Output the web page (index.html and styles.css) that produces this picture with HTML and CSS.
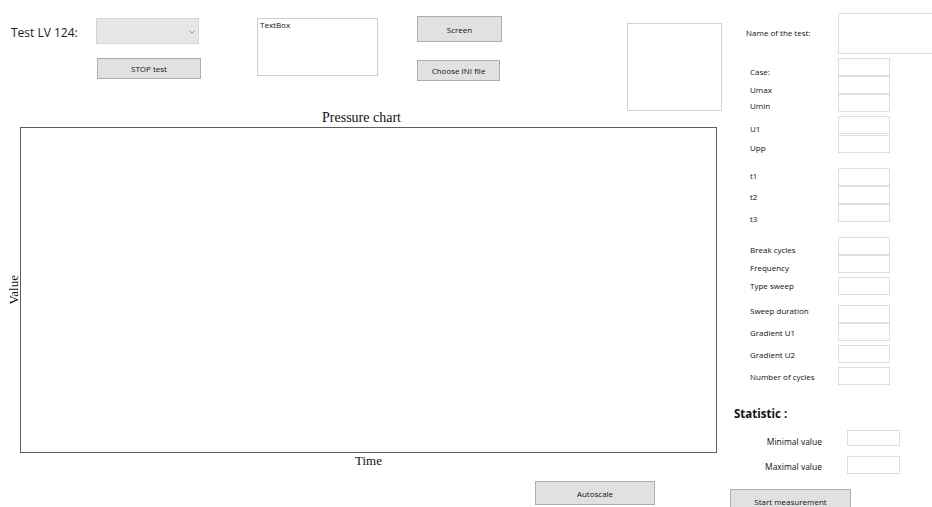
FILE: index.html
```html
<!DOCTYPE html>
<html lang="en">
<head>
<meta charset="utf-8">
<title>Test LV 124</title>
<link rel="stylesheet" href="styles.css">
</head>
<body>
<div class="window">
  <main class="main">
    <div class="toolbar">
      <div class="test-label">Test LV 124:</div>
      <div class="stack stack-run">
        <div class="combo">
          <svg class="combo-arrow" width="6" height="4" viewBox="0 0 6 4"><path d="M0.5 0.8 L3 3.2 L5.5 0.8" fill="none" stroke="#8a8a8a" stroke-width="1"/></svg>
        </div>
        <button class="btn btn-stop">STOP test</button>
      </div>
      <div class="memo">TextBox</div>
      <div class="stack stack-file">
        <button class="btn btn-screen">Screen</button>
        <button class="btn btn-ini">Choose INI file</button>
      </div>
      <div class="preview"></div>
    </div>

    <div class="chart">
      <div class="chart-title">Pressure chart</div>
      <div class="axis-y">Value</div>
      <div class="plot"></div>
      <div class="axis-x">Time</div>
    </div>

    <div class="footer">
      <button class="btn btn-autoscale">Autoscale</button>
    </div>
  </main>

  <aside class="panel">
    <div class="params">
      <div class="labels">
        <span class="lbl lbl-name">Name of the test:</span>
        <span class="lbl mt-27">Case:</span>
        <span class="lbl mt-6">Umax</span>
        <span class="lbl mt-4">Umin</span>
        <span class="lbl mt-11">U1</span>
        <span class="lbl mt-7">Upp</span>
        <span class="lbl mt-16">t1</span>
        <span class="lbl mt-9">t2</span>
        <span class="lbl mt-10">t3</span>
        <span class="lbl mt-19">Break cycles</span>
        <span class="lbl mt-6">Frequency</span>
        <span class="lbl mt-6">Type sweep</span>
        <span class="lbl mt-13">Sweep duration</span>
        <span class="lbl mt-10">Gradient U1</span>
        <span class="lbl mt-10">Gradient U2</span>
        <span class="lbl mt-10">Number of cycles</span>
      </div>
      <div class="fields">
        <div class="field field-name"></div>
        <div class="field mt-4"></div>
        <div class="field"></div>
        <div class="field"></div>
        <div class="field mt-4"></div>
        <div class="field mt-1"></div>
        <div class="field mt-15"></div>
        <div class="field"></div>
        <div class="field"></div>
        <div class="field mt-15"></div>
        <div class="field"></div>
        <div class="field mt-4"></div>
        <div class="field mt-10"></div>
        <div class="field"></div>
        <div class="field mt-4"></div>
        <div class="field mt-4"></div>
      </div>
    </div>

    <div class="stats">
      <div class="stats-title">Statistic :</div>
      <div class="stat-row stat-min">
        <span class="stat-label">Minimal value</span>
        <div class="field stat-field"></div>
      </div>
      <div class="stat-row stat-max">
        <span class="stat-label">Maximal value</span>
        <div class="field stat-field"></div>
      </div>
      <button class="btn btn-measure">Start measurement</button>
    </div>
  </aside>
</div>
</body>
</html>
```

FILE: styles.css
```css
* {
  box-sizing: border-box;
}

html, body {
  margin: 0;
  padding: 0;
  background: #ffffff;
}

body {
  font-family: "Open Sans", "Noto Sans", sans-serif;
  color: #111;
  width: 932px;
  height: 507px;
  overflow: hidden;
}

.window {
  display: grid;
  grid-template-columns: 730px 202px;
  height: 507px;
}

/* ---------- left side ---------- */

.toolbar {
  display: flex;
  align-items: flex-start;
  height: 109px;
}

.test-label {
  width: 96px;
  padding-left: 11px;
  margin-top: 25px;
  font-size: 12px;
  line-height: 16px;
  color: #1a1a1a;
}

.stack {
  display: flex;
  flex-direction: column;
  align-items: flex-start;
}

.stack-run {
  margin-top: 18px;
}

.combo {
  position: relative;
  width: 103px;
  height: 26px;
  background: #e6e6e6;
  border: 1px solid #d6d6d6;
}

.combo-arrow {
  position: absolute;
  right: 3px;
  top: 11px;
}

.btn {
  display: flex;
  align-items: center;
  justify-content: center;
  padding: 0;
  font-family: "Open Sans", "Noto Sans", sans-serif;
  font-size: 8px;
  color: #111;
  background: #e1e1e1;
  border: 1px solid #adadad;
  border-radius: 0;
}

.btn-stop {
  margin-top: 14px;
  margin-left: 1px;
  width: 104px;
  height: 21px;
}

.memo {
  margin-top: 18px;
  margin-left: 56px;
  width: 121px;
  height: 58px;
  border: 1px solid #cfcfcf;
  padding: 1px 2px;
  font-size: 8px;
  line-height: 10px;
}

.stack-file {
  margin-top: 16px;
  margin-left: 39px;
}

.btn-screen {
  width: 85px;
  height: 26px;
}

.btn-ini {
  margin-top: 18px;
  width: 83px;
  height: 21px;
}

.preview {
  flex: none;
  margin-top: 23px;
  margin-left: 125px;
  width: 95px;
  height: 88px;
  border: 1px solid #d2d2d2;
}

/* chart */

.chart {
  display: grid;
  grid-template-columns: 20px 697px;
  grid-template-rows: 18px 326px 16px;
  font-family: "Liberation Serif", "Times New Roman", serif;
  font-size: 13px;
  color: #111;
}

.chart-title {
  grid-column: 2;
  grid-row: 1;
  text-align: center;
  font-size: 14px;
  line-height: 18px;
  padding-right: 14px;
}

.axis-y {
  grid-column: 1;
  grid-row: 2;
  justify-self: end;
  align-self: center;
  writing-mode: vertical-rl;
  transform: rotate(180deg);
  line-height: 13px;
}

.plot {
  grid-column: 2;
  grid-row: 2;
  border: 1px solid #5c5c5c;
}

.axis-x {
  grid-column: 2;
  grid-row: 3;
  text-align: center;
  line-height: 15px;
}

.footer {
  display: flex;
  padding-top: 12px;
  padding-left: 535px;
}

.btn-autoscale {
  width: 120px;
  height: 24px;
}

/* ---------- right panel ---------- */

.panel {
  display: flex;
  flex-direction: column;
  min-width: 0;
}

.params {
  display: flex;
  align-items: flex-start;
}

.labels {
  flex: none;
  display: flex;
  flex-direction: column;
  width: 108px;
  padding-left: 20px;
}

.lbl {
  display: block;
  height: 12px;
  line-height: 12px;
  font-size: 8px;
  white-space: nowrap;
}

.lbl-name {
  margin-top: 27px;
  margin-left: -4px;
}

.fields {
  flex: none;
  display: flex;
  flex-direction: column;
}

.field {
  width: 52px;
  height: 18px;
  border: 1px solid #dedede;
  background: #fff;
}

.field-name {
  margin-top: 13px;
  width: 100px;
  height: 41px;
}

.mt-1 { margin-top: 1px; }
.mt-4 { margin-top: 4px; }
.mt-6 { margin-top: 6px; }
.mt-7 { margin-top: 7px; }
.mt-9 { margin-top: 9px; }
.mt-10 { margin-top: 10px; }
.mt-11 { margin-top: 11px; }
.mt-13 { margin-top: 13px; }
.mt-15 { margin-top: 15px; }
.mt-16 { margin-top: 16px; }
.mt-19 { margin-top: 19px; }
.mt-27 { margin-top: 27px; }

/* statistics */

.stats {
  display: flex;
  flex-direction: column;
  align-items: flex-start;
}

.stats-title {
  margin-top: 21px;
  padding-left: 4px;
  font-size: 11.5px;
  font-weight: 700;
  line-height: 15px;
}

.stat-row {
  display: flex;
  align-items: flex-start;
}

.stat-min {
  margin-top: 9px;
}

.stat-max {
  margin-top: 8px;
}

.stat-label {
  width: 92px;
  text-align: right;
  font-size: 8.5px;
  line-height: 12px;
  white-space: nowrap;
}

.stat-min .stat-label {
  margin-top: 6px;
}

.stat-max .stat-label {
  margin-top: 5px;
}

.stat-field {
  margin-left: 25px;
  width: 53px;
}

.stat-min .stat-field {
  height: 16px;
}

.btn-measure {
  margin-top: 15px;
  width: 121px;
  height: 24px;
}
```
